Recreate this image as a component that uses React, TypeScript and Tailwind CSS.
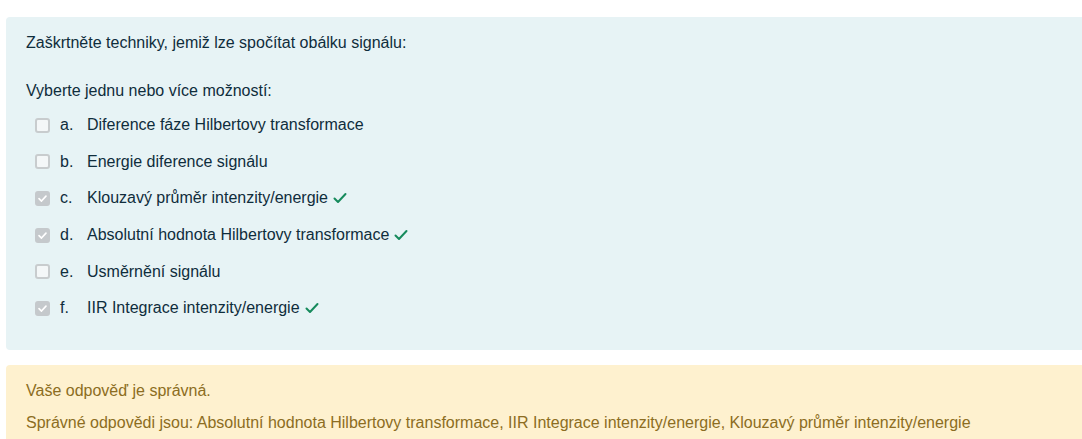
import React from "react";

interface Option {
  letter: string;
  label: string;
  checked: boolean;
}

const options: Option[] = [
  { letter: "a.", label: "Diference fáze Hilbertovy transformace", checked: false },
  { letter: "b.", label: "Energie diference signálu", checked: false },
  { letter: "c.", label: "Klouzavý průměr intenzity/energie", checked: true },
  { letter: "d.", label: "Absolutní hodnota Hilbertovy transformace", checked: true },
  { letter: "e.", label: "Usměrnění signálu", checked: false },
  { letter: "f.", label: "IIR Integrace intenzity/energie", checked: true },
];

function Checkbox({ checked }: { checked: boolean }) {
  if (checked) {
    return (
      <span className="flex h-[15px] w-[15px] items-center justify-center rounded-[3px] bg-[#c5c9cc]">
        <svg width="11" height="11" viewBox="0 0 12 12" fill="none">
          <path d="M2.2 6.2 L4.9 8.8 L9.8 3.4" stroke="#fff" strokeWidth="1.8" strokeLinecap="round" strokeLinejoin="round" />
        </svg>
      </span>
    );
  }
  return <span className="h-[15px] w-[15px] rounded-[3px] border-2 border-[#c8ccce] bg-[#f4f7f8]" />;
}

function Tick() {
  return (
    <svg width="14" height="12" viewBox="0 0 14 12" fill="none" className="ml-[5px] inline-block">
      <path d="M1.5 6.5 L5 10 L12.5 2" stroke="#168a5c" strokeWidth="2" strokeLinecap="round" strokeLinejoin="round" />
    </svg>
  );
}

export default function App() {
  return (
    <div className="min-h-screen bg-white pl-[6px] pt-[17px] font-['Liberation_Sans',Arial,sans-serif] text-[16px] leading-[22px]">
      {/* formulation */}
      <div className="rounded-l-[4px] bg-[#e7f3f5] pl-5 pt-[15px] pb-[23px] text-[#0f2d3c]">
        <p>Zaškrtněte techniky, jemiž lze spočítat obálku signálu:</p>
        <p className="mt-[26px]">Vyberte jednu nebo více možností:</p>
        <div className="mt-[5px]">
          {options.map((o) => (
            <div key={o.letter} className="flex h-[36.6px] items-center pl-[9px]">
              <Checkbox checked={o.checked} />
              <span className="ml-[10px] w-[27px]">{o.letter}</span>
              <span>{o.label}</span>
              {o.checked && <Tick />}
            </div>
          ))}
        </div>
      </div>

      {/* outcome */}
      <div className="mt-[15px] rounded-l-[4px] bg-[#fef1cf] pl-5 pt-[15px] pb-4 text-[#8c6d22]">
        <p>Vaše odpověď je správná.</p>
        <p className="mt-[10px]">
          Správné odpovědi jsou: Absolutní hodnota Hilbertovy transformace, IIR Integrace intenzity/energie, Klouzavý průměr intenzity/energie
        </p>
      </div>
    </div>
  );
}
